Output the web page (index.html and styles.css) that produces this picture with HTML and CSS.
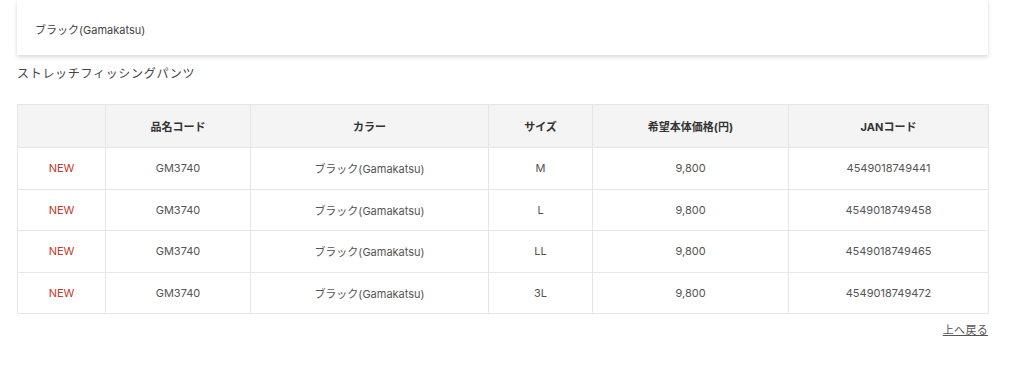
FILE: index.html
```html
<!DOCTYPE html>
<html lang="ja">
<head>
<meta charset="utf-8">
<link rel="stylesheet" href="styles.css">
</head>
<body>
<div class="page">
  <div class="select-card">
    <span class="select-text">ブラック(Gamakatsu)</span>
  </div>
  <h2 class="product-name">ストレッチフィッシングパンツ</h2>
  <table class="spec">
    <colgroup>
      <col class="c1"><col class="c2"><col class="c3"><col class="c4"><col class="c5"><col class="c6">
    </colgroup>
    <thead>
      <tr><th></th><th>品名コード</th><th>カラー</th><th>サイズ</th><th>希望本体価格(円)</th><th>JANコード</th></tr>
    </thead>
    <tbody>
      <tr><td class="new">NEW</td><td>GM3740</td><td>ブラック(Gamakatsu)</td><td>M</td><td>9,800</td><td>4549018749441</td></tr>
      <tr><td class="new">NEW</td><td>GM3740</td><td>ブラック(Gamakatsu)</td><td>L</td><td>9,800</td><td>4549018749458</td></tr>
      <tr><td class="new">NEW</td><td>GM3740</td><td>ブラック(Gamakatsu)</td><td>LL</td><td>9,800</td><td>4549018749465</td></tr>
      <tr><td class="new">NEW</td><td>GM3740</td><td>ブラック(Gamakatsu)</td><td>3L</td><td>9,800</td><td>4549018749472</td></tr>
    </tbody>
  </table>
  <div class="back-row"><a class="back" href="#">上へ戻る</a></div>
</div>
</body>
</html>
```
FILE: styles.css
```css
html, body {
  margin: 0;
  padding: 0;
  background: #fff;
}
body {
  font-family: Inter, "Noto Sans CJK JP", sans-serif;
  color: #444;
}
.page {
  width: 971px;
  margin-left: 17px;
}
.select-card {
  height: 55px;
  display: flex;
  align-items: center;
  padding-left: 18px;
  padding-top: 2px;
  box-sizing: border-box;
  background: #fff;
  box-shadow: 0 2px 4px rgba(0,0,0,0.16);
}
.select-text {
  font-size: 11px;
  color: #444;
}
.product-name {
  margin: 11px 0 0;
  font-size: 12px;
  font-weight: 400;
  letter-spacing: 0.7px;
  color: #444;
  line-height: 16px;
}
.spec {
  margin-top: 22px;
  width: 971px;
  border-collapse: collapse;
  table-layout: fixed;
  font-size: 11px;
  color: #555;
}
.c1 { width: 88px; }
.c2 { width: 145px; }
.c3 { width: 238px; }
.c4 { width: 104px; }
.c5 { width: 196px; }
.c6 { width: 200px; }
.spec th, .spec td {
  border: 1px solid #e6e6e6;
  text-align: center;
  padding: 0;
}
.spec th {
  background: #f4f4f4;
  height: 42px;
  font-weight: 700;
  color: #333;
}
.spec td {
  height: 40.5px;
}
.spec td.new {
  color: #c0392b;
}
.back-row {
  display: flex;
  justify-content: flex-end;
  margin-top: 7px;
}
.back {
  font-size: 11px;
  color: #555;
  text-decoration: underline;
  letter-spacing: 0.3px;
}
```
